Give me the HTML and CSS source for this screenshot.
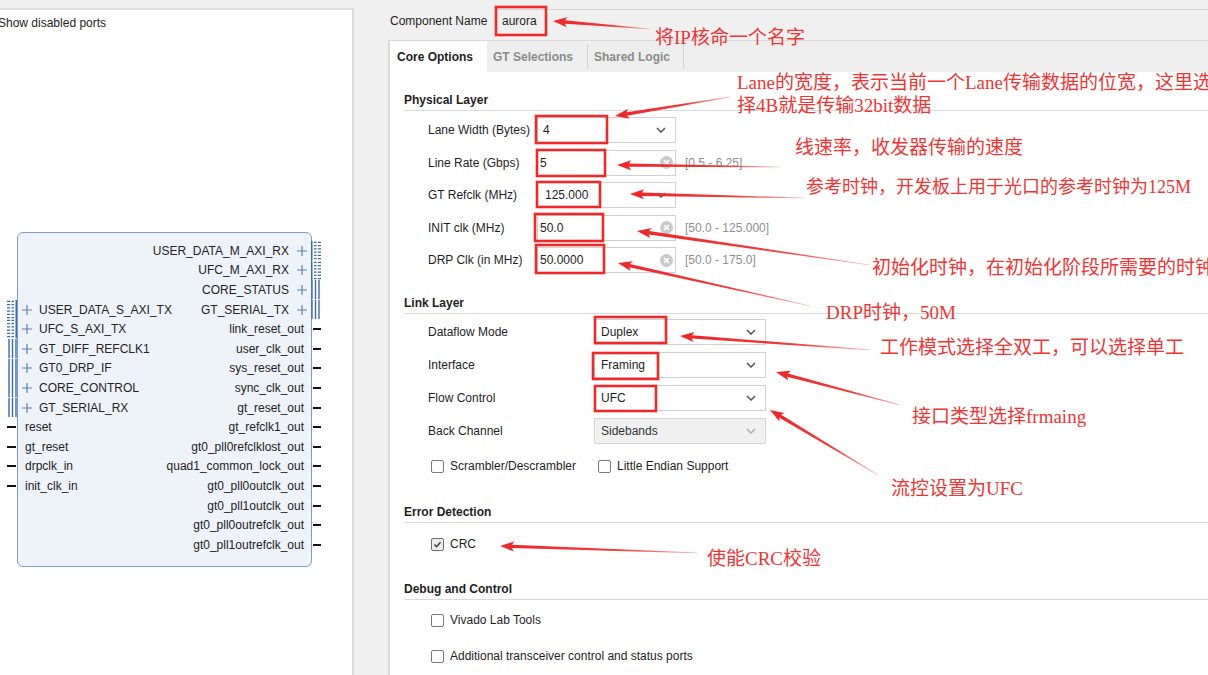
FILE: index.html
```html
<!DOCTYPE html>
<html>
<head>
<meta charset="utf-8">
<title>Aurora IP</title>
<link rel="stylesheet" href="styles.css">
</head>
<body>
<svg class="defs" aria-hidden="true">
  <symbol id="axi" viewBox="0 0 10 20" preserveAspectRatio="none">
    <rect x="0" y="0" width="1.5" height="20" fill="#3b6aad"/>
    <path d="M3 1.5h2.6M6.8 1.5h3.2M3 4.8h2.6M6.8 4.8h3.2M3 8.1h2.6M6.8 8.1h3.2M3 11.4h2.6M6.8 11.4h3.2M3 14.7h2.6M6.8 14.7h3.2M3 18h2.6M6.8 18h3.2" stroke="#3b6aad" stroke-width="1.3"/>
  </symbol>
  <symbol id="bus" viewBox="0 0 10 20" preserveAspectRatio="none">
    <path d="M1 0v20M4.5 0v20M8 0v20" stroke="#3b6aad" stroke-width="1.4"/>
  </symbol>
  <symbol id="plus" viewBox="0 0 10 10">
    <path d="M0 5h10M5 0v10" stroke="#5d7fae" stroke-width="1.2"/>
  </symbol>
  <symbol id="chev" viewBox="0 0 10 6">
    <path d="M1 1l4 4 4-4" fill="none" stroke="currentColor" stroke-width="1.5"/>
  </symbol>
  <symbol id="clr" viewBox="0 0 13 13">
    <circle cx="6.5" cy="6.5" r="6.5" fill="#c9c9c9"/>
    <path d="M4 4l5 5M9 4l-5 5" stroke="#fff" stroke-width="1.6"/>
  </symbol>
</svg>

<div class="app">
  <aside class="left">
    <div class="show">Show disabled ports</div>
    <div class="block">
      <div class="prow"><div class="pr"><span>USER_DATA_M_AXI_RX</span><svg class="plus"><use href="#plus"/></svg><svg class="g"><use href="#axi"/></svg></div></div>
      <div class="prow"><div class="pr"><span>UFC_M_AXI_RX</span><svg class="plus"><use href="#plus"/></svg><svg class="g"><use href="#axi"/></svg></div></div>
      <div class="prow"><div class="pr"><span>CORE_STATUS</span><svg class="plus"><use href="#plus"/></svg><svg class="g"><use href="#bus"/></svg></div></div>
      <div class="prow">
        <div class="pl"><svg class="g"><use href="#axi"/></svg><svg class="plus"><use href="#plus"/></svg><span>USER_DATA_S_AXI_TX</span></div>
        <div class="pr"><span>GT_SERIAL_TX</span><svg class="plus"><use href="#plus"/></svg><svg class="g"><use href="#bus"/></svg></div>
      </div>
      <div class="prow">
        <div class="pl"><svg class="g"><use href="#axi"/></svg><svg class="plus"><use href="#plus"/></svg><span>UFC_S_AXI_TX</span></div>
        <div class="pr"><span>link_reset_out</span><i class="stub"></i></div>
      </div>
      <div class="prow">
        <div class="pl"><svg class="g"><use href="#bus"/></svg><svg class="plus"><use href="#plus"/></svg><span>GT_DIFF_REFCLK1</span></div>
        <div class="pr"><span>user_clk_out</span><i class="stub"></i></div>
      </div>
      <div class="prow">
        <div class="pl"><svg class="g"><use href="#bus"/></svg><svg class="plus"><use href="#plus"/></svg><span>GT0_DRP_IF</span></div>
        <div class="pr"><span>sys_reset_out</span><i class="stub"></i></div>
      </div>
      <div class="prow">
        <div class="pl"><svg class="g"><use href="#bus"/></svg><svg class="plus"><use href="#plus"/></svg><span>CORE_CONTROL</span></div>
        <div class="pr"><span>sync_clk_out</span><i class="stub"></i></div>
      </div>
      <div class="prow">
        <div class="pl"><svg class="g"><use href="#bus"/></svg><svg class="plus"><use href="#plus"/></svg><span>GT_SERIAL_RX</span></div>
        <div class="pr"><span>gt_reset_out</span><i class="stub"></i></div>
      </div>
      <div class="prow">
        <div class="pl"><i class="stub"></i><span>reset</span></div>
        <div class="pr"><span>gt_refclk1_out</span><i class="stub"></i></div>
      </div>
      <div class="prow">
        <div class="pl"><i class="stub"></i><span>gt_reset</span></div>
        <div class="pr"><span>gt0_pll0refclklost_out</span><i class="stub"></i></div>
      </div>
      <div class="prow">
        <div class="pl"><i class="stub"></i><span>drpclk_in</span></div>
        <div class="pr"><span>quad1_common_lock_out</span><i class="stub"></i></div>
      </div>
      <div class="prow">
        <div class="pl"><i class="stub"></i><span>init_clk_in</span></div>
        <div class="pr"><span>gt0_pll0outclk_out</span><i class="stub"></i></div>
      </div>
      <div class="prow"><div class="pr"><span>gt0_pll1outclk_out</span><i class="stub"></i></div></div>
      <div class="prow"><div class="pr"><span>gt0_pll0outrefclk_out</span><i class="stub"></i></div></div>
      <div class="prow"><div class="pr"><span>gt0_pll1outrefclk_out</span><i class="stub"></i></div></div>
    </div>
  </aside>

  <main class="right">
    <div class="comp">
      <span class="comp-label">Component Name</span>
      <span class="comp-input">aurora</span>
    </div>
    <div class="tabs-panel">
      <div class="tabs">
        <div class="tab active">Core Options</div>
        <div class="tab t2">GT Selections</div>
        <div class="sep"></div>
        <div class="tab t3">Shared Logic</div>
        <div class="sep"></div>
      </div>
      <div class="content">
        <div class="section s-phys">Physical Layer</div>
        <div class="fields phys">
          <div class="field"><span class="label">Lane Width (Bytes)</span><div class="ctl"><span>4</span><svg class="chev"><use href="#chev"/></svg></div></div>
          <div class="field"><span class="label">Line Rate (Gbps)</span><div class="ctl txt"><span>5</span><svg class="clr"><use href="#clr"/></svg></div><span class="range">[0.5 - 6.25]</span></div>
          <div class="field"><span class="label">GT Refclk (MHz)</span><div class="ctl wide"><span>125.000</span><svg class="chev"><use href="#chev"/></svg></div></div>
          <div class="field"><span class="label">INIT clk (MHz)</span><div class="ctl txt"><span>50.0</span><svg class="clr"><use href="#clr"/></svg></div><span class="range">[50.0 - 125.000]</span></div>
          <div class="field"><span class="label">DRP Clk (in MHz)</span><div class="ctl txt"><span>50.0000</span><svg class="clr"><use href="#clr"/></svg></div><span class="range">[50.0 - 175.0]</span></div>
        </div>

        <div class="section s-link">Link Layer</div>
        <div class="fields link">
          <div class="field"><span class="label">Dataflow Mode</span><div class="ctl"><span>Duplex</span><svg class="chev"><use href="#chev"/></svg></div></div>
          <div class="field"><span class="label">Interface</span><div class="ctl"><span>Framing</span><svg class="chev"><use href="#chev"/></svg></div></div>
          <div class="field"><span class="label">Flow Control</span><div class="ctl"><span>UFC</span><svg class="chev"><use href="#chev"/></svg></div></div>
          <div class="field"><span class="label">Back Channel</span><div class="ctl dis"><span>Sidebands</span><svg class="chev"><use href="#chev"/></svg></div></div>
        </div>
        <div class="cbrow r-scr">
          <label class="cb first"><span class="box"></span>Scrambler/Descrambler</label>
          <label class="cb"><span class="box"></span>Little Endian Support</label>
        </div>

        <div class="section s-err">Error Detection</div>
        <div class="cbrow r-crc">
          <label class="cb"><span class="box checked"><svg class="chk" viewBox="0 0 13 13"><path d="M2.8 6.6l2.5 2.6 4.8-5.4" fill="none" stroke="#3a3a3a" stroke-width="1.7"/></svg></span>CRC</label>
        </div>

        <div class="section s-dbg">Debug and Control</div>
        <div class="cbrow r-viv">
          <label class="cb"><span class="box"></span>Vivado Lab Tools</label>
        </div>
        <div class="cbrow r-add">
          <label class="cb"><span class="box"></span>Additional transceiver control and status ports</label>
        </div>
      </div>
    </div>
  </main>
</div>

<div class="annot">
  <svg class="overlay" width="1208" height="675" viewBox="0 0 1208 675">
    <defs>
      <linearGradient id="fade" x1="0" y1="0" x2="1" y2="0">
        <stop offset="0" stop-color="#ee2626" stop-opacity="1"/>
        <stop offset="0.6" stop-color="#ee2626" stop-opacity="0.9"/>
        <stop offset="1" stop-color="#ee2626" stop-opacity="0.35"/>
      </linearGradient>
    </defs>
    <g fill="none" stroke="#f02828" stroke-width="2.6">
      <rect x="496" y="7" width="50" height="28"/>
      <rect x="536" y="116" width="71" height="27"/>
      <rect x="537" y="150" width="68" height="26"/>
      <rect x="537" y="182" width="63" height="25"/>
      <rect x="535" y="214" width="68" height="27"/>
      <rect x="536" y="245" width="68" height="28"/>
      <rect x="595" y="317" width="71" height="26"/>
      <rect x="593" y="353" width="65" height="26"/>
      <rect x="595" y="386" width="61" height="25"/>
    </g>
    <g fill="url(#fade)">
      <polygon transform="translate(553 21) rotate(4.7)" points="0,0 14,-5 12,-1.7 97,-0.3 97,0.3 12,1.7 14,5"/>
      <polygon transform="translate(615 116) rotate(-9.4)" points="0,0 14,-5 12,-1.7 117,-0.3 117,0.3 12,1.7 14,5"/>
      <polygon transform="translate(617 165) rotate(0.7)" points="0,0 14,-5 12,-1.7 163,-0.3 163,0.3 12,1.7 14,5"/>
      <polygon transform="translate(630 194) rotate(1.3)" points="0,0 14,-5 12,-1.7 175,-0.3 175,0.3 12,1.7 14,5"/>
      <polygon transform="translate(637 231) rotate(8.3)" points="0,0 14,-5 12,-1.7 235,-0.3 235,0.3 12,1.7 14,5"/>
      <polygon transform="translate(618 263) rotate(12.6)" points="0,0 14,-5 12,-1.7 197,-0.3 197,0.3 12,1.7 14,5"/>
      <polygon transform="translate(680 336) rotate(4.2)" points="0,0 14,-5 12,-1.7 190,-0.3 190,0.3 12,1.7 14,5"/>
      <polygon transform="translate(776 372) rotate(14.9)" points="0,0 14,-5 12,-1.7 128,-0.3 128,0.3 12,1.7 14,5"/>
      <polygon transform="translate(770 410) rotate(31)" points="0,0 14,-5 12,-1.7 126,-0.3 126,0.3 12,1.7 14,5"/>
      <polygon transform="translate(500 546) rotate(2)" points="0,0 14,-5 12,-1.7 197,-0.3 197,0.3 12,1.7 14,5"/>
    </g>
  </svg>
  <div class="note n1">将IP核命一个名字</div>
  <div class="note n2">Lane的宽度，表示当前一个Lane传输数据的位宽，这里选<br>择4B就是传输32bit数据</div>
  <div class="note n3">线速率，收发器传输的速度</div>
  <div class="note n4">参考时钟，开发板上用于光口的参考时钟为125M</div>
  <div class="note n5">初始化时钟，在初始化阶段所需要的时钟</div>
  <div class="note n6">DRP时钟，50M</div>
  <div class="note n7">工作模式选择全双工，可以选择单工</div>
  <div class="note n8">接口类型选择frmaing</div>
  <div class="note n9">流控设置为UFC</div>
  <div class="note n10">使能CRC校验</div>
</div>
</body>
</html>
```

FILE: styles.css
```css
* { box-sizing: border-box; }
html, body { margin: 0; padding: 0; overflow: hidden; }
body {
  width: 1208px;
  height: 675px;
  position: relative;
  background: #f0f0f0;
  font-family: "Liberation Sans", Arial, sans-serif;
  font-size: 12px;
  color: #1e1e1e;
}
.defs { position: absolute; width: 0; height: 0; overflow: hidden; }

.app { display: flex; height: 675px; }

/* ---------- left: block diagram ---------- */
.left {
  flex: none;
  width: 354px;
  margin-top: 8px;
  background: #fff;
  border-top: 2px solid #dedede;
  border-right: 2px solid #dcdcdc;
}
.show { margin: 6px 0 0 -2px; line-height: 14px; }
.block {
  margin: 202px 0 0 17px;
  width: 295px;
  height: 335px;
  padding-top: 8px;
  background: #eef3fa;
  border: 1px solid #7d9cc6;
  border-radius: 6px;
  color: #222;
}
.prow {
  display: flex;
  align-items: center;
  height: 19.6px;
  margin: 0 -10px 0 -11px;
  white-space: nowrap;
}
.pl, .pr { display: flex; align-items: center; height: 100%; }
.pr { margin-left: auto; }
.g { display: block; flex: none; width: 10px; height: 19.6px; }
.pl .g { transform: scaleX(-1); }
.plus { flex: none; width: 10px; height: 10px; }
.pl .plus { margin: 0 7px 0 5px; }
.pr .plus { margin: 0 4px 0 8px; }
.stub { display: block; flex: none; height: 2px; background: #111; }
.pl .stub { width: 9px; margin-right: 9px; }
.pr .stub { width: 8px; margin-left: 9px; }

/* ---------- right: IP customization ---------- */
.right {
  flex: 1;
  min-width: 0;
  padding-left: 34px;
  display: flex;
  flex-direction: column;
}
.comp { display: flex; align-items: center; height: 24px; margin-top: 9px; }
.comp-label { flex: none; width: 109px; padding-left: 2px; }
.comp-input {
  flex: 1;
  height: 24px;
  line-height: 22px;
  padding-left: 5px;
  border-top: 1px solid #d2d2d2;
}
.tabs-panel {
  flex: 1;
  margin-top: 7px;
  display: flex;
  flex-direction: column;
  border-top: 1px solid #d9d9d9;
  border-left: 2px solid #dadada;
}
.tabs {
  flex: none;
  display: flex;
  align-items: center;
  height: 31px;
  background: #eeeeee;
  font-weight: bold;
}
.tab { height: 100%; display: flex; align-items: center; color: #8a8a8a; }
.tab.active { width: 97px; padding-left: 7px; background: #fff; color: #1e1e1e; }
.tab.t2 { width: 100px; padding-left: 6px; }
.tab.t3 { width: 95px; padding-left: 6px; }
.sep { width: 1px; height: 25px; background: #d2d2d2; }

.content { flex: 1; background: #fff; padding-left: 14px; }
.section {
  font-weight: bold;
  line-height: 14px;
  padding-bottom: 3px;
  border-bottom: 1px solid #dadada;
}
.s-phys { margin-top: 21px; }
.s-link { margin-top: 23px; }
.s-err { margin-top: 31px; }
.s-dbg { margin-top: 30px; }

.phys { margin-top: 6px; }
.link { margin-top: 5px; }
.field { display: flex; align-items: center; height: 26px; white-space: nowrap; }
.phys .field + .field { margin-top: 6.5px; }
.link .field + .field { margin-top: 7px; }
.label { flex: none; width: 133px; padding-left: 24px; }
.link .label { width: 190px; }
.ctl {
  flex: none;
  display: flex;
  align-items: center;
  width: 139px;
  height: 26px;
  padding-left: 5px;
  background: #fff;
  border: 1px solid #d0d0d0;
}
.ctl.txt { padding-left: 2px; }
.ctl.wide { padding-left: 7px; }
.link .ctl { width: 172px; padding-left: 6px; }
.ctl.dis { background: #f0f0f0; border-color: #d6d6d6; color: #333; }
.chev { width: 10px; height: 6px; margin-left: auto; margin-right: 9px; color: #555; }
.dis .chev { color: #b0b0b0; }
.clr { width: 13px; height: 13px; margin-left: auto; margin-right: 2px; }
.range { margin-left: 9px; color: #8e8e8e; }

.cbrow { display: flex; align-items: center; height: 16px; padding-left: 27px; white-space: nowrap; }
.r-scr { margin-top: 14px; }
.r-crc { margin-top: 13px; }
.r-viv { margin-top: 12px; }
.r-add { margin-top: 20px; }
.cb { display: flex; align-items: center; }
.cb.first { width: 167px; }
.box {
  flex: none;
  width: 13px;
  height: 13px;
  margin-right: 6px;
  background: #fff;
  border: 1px solid #7a7a7a;
  border-radius: 2px;
  display: flex;
  align-items: center;
  justify-content: center;
}
.box.checked { background: #ececec; border-color: #6e6e6e; }
.chk { width: 11px; height: 11px; }

/* ---------- red annotations (drawn over the UI) ---------- */
.annot {
  position: absolute;
  left: 0;
  top: 0;
  width: 1208px;
  height: 675px;
  overflow: hidden;
  pointer-events: none;
}
.overlay { position: absolute; left: 0; top: 0; }
.note {
  position: absolute;
  white-space: nowrap;
  color: #f03434;
  font-family: "Liberation Serif", "Noto Sans CJK SC", serif;
  font-size: 19px;
  line-height: 23px;
}
.n1 { left: 655px; top: 26px; }
.n2 { left: 737px; top: 71px; }
.n3 { left: 795px; top: 136px; }
.n4 { left: 806px; top: 176px; font-size: 18px; }
.n5 { left: 872px; top: 256px; }
.n6 { left: 826px; top: 301px; }
.n7 { left: 880px; top: 336px; }
.n8 { left: 912px; top: 405px; }
.n9 { left: 891px; top: 477px; }
.n10 { left: 707px; top: 547px; }
```
